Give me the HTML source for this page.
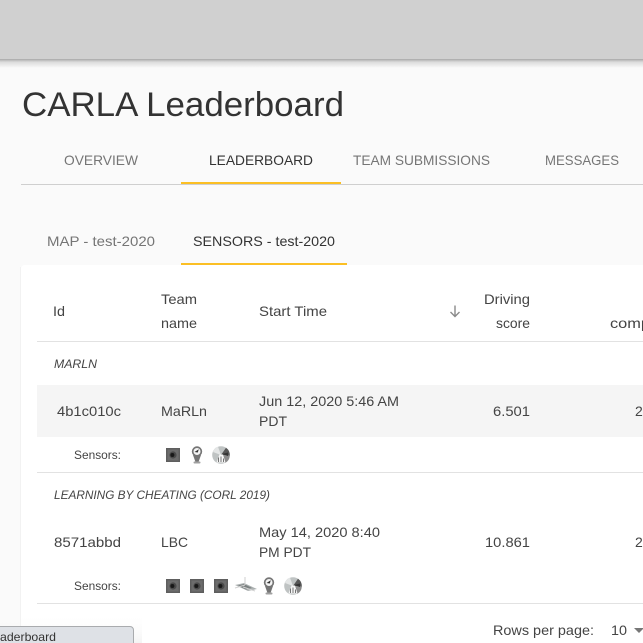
<!DOCTYPE html>
<html><head><meta charset="utf-8"><style>
html,body{margin:0;padding:0;width:643px;height:643px;overflow:hidden;background:#fafafa}
svg{display:block}
text{font-family:"Liberation Sans",sans-serif;font-size:14px;fill:#444}
</style></head><body>
<svg width="643" height="643" viewBox="0 0 643 643" xmlns="http://www.w3.org/2000/svg">
<defs>
<linearGradient id="sh" x1="0" y1="0" x2="0" y2="1"><stop offset="0" stop-color="#a8a8a8"/><stop offset=".35" stop-color="#dcdcdc"/><stop offset="1" stop-color="#fafafa"/></linearGradient>
<linearGradient id="tt" x1="0" y1="0" x2="0" y2="1"><stop offset="0" stop-color="#fafafa" stop-opacity="0"/><stop offset="1" stop-color="#e9e9e9"/></linearGradient>
<g id="cam"><rect width="14" height="14" fill="#5e5e5e"/><rect x="1.500" y="1.500" width="11" height="11" fill="#6c6c6c"/><circle cx="7" cy="7" r="3.600" fill="#4a4a4a"/><circle cx="6.400" cy="7" r="2" fill="#181818"/></g>
<g id="pin"><circle cx="6" cy="5.500" r="5.200" fill="#757575"/><circle cx="6" cy="5.500" r="3.500" fill="#f4f4f4"/><path d="M3.500 6 L7.800 3.300 L6.800 6.500Z" fill="#333"/><path d="M2 9 L4.300 15.500 H7.700 L10 9Z" fill="#757575"/><rect x="2.500" y="15.500" width="7" height="2" rx="1" fill="#a0a0a0"/></g>
<g id="gps"><circle cx="9" cy="9" r="8.800" fill="#bfc3c3"/><path d="M9 9 L14 1.800 A8.800 8.800 0 0 1 17.800 9.500Z" fill="#565656"/><path d="M9 9 L17.800 9.500 A8.800 8.800 0 0 1 13 17Z" fill="#8b8b8b"/><path d="M9 9 L6 .7 A8.800 8.800 0 0 0 1 6Z" fill="#e4e6e6"/><path d="M4.500 16.500 L7.500 8.500 L11 8.500 L13.500 16.500Z" fill="#f6f6f6"/><path d="M6.500 16 V11.500 M9 16 V10.500 M11.500 16 V12.500" stroke="#666" stroke-width=".9"/><path d="M10 8 L16 6.500 V10Z" fill="#333"/></g>
<g id="lidar"><path d="M0 8 L9 6 L22 12 L13 14Z" fill="#adb2b2"/><path d="M3 8.500 L9 7 L17 11 L11 12.500Z" fill="#7b8181"/><path d="M10 0 V8" stroke="#cfcfcf" stroke-width="1"/><path d="M0 11 L10 8 M8 10 L20 14" stroke="#d2d2d2" stroke-width="1"/></g>
</defs>
<rect width="643" height="643" fill="#fafafa"/>
<rect x="0" y="59" width="643" height="9" fill="url(#sh)"/>
<rect width="643" height="59" fill="#d0d0d0"/>
<text x="22" y="116" style="font-size:34px;fill:#333" textLength="322" lengthAdjust="spacingAndGlyphs">CARLA Leaderboard</text>
<text x="64" y="165" style="fill:#757575" textLength="74" lengthAdjust="spacingAndGlyphs">OVERVIEW</text>
<text x="209" y="165" style="fill:#333" textLength="104" lengthAdjust="spacingAndGlyphs">LEADERBOARD</text>
<text x="353" y="165" style="fill:#757575" textLength="137" lengthAdjust="spacingAndGlyphs">TEAM SUBMISSIONS</text>
<text x="545" y="165" style="fill:#757575" textLength="74" lengthAdjust="spacingAndGlyphs">MESSAGES</text>
<rect x="21" y="184" width="622" height="1" fill="#cfcfcf"/>
<rect x="181" y="182" width="160" height="2" fill="#fbbf24"/>
<text x="47" y="246" style="fill:#757575" textLength="108" lengthAdjust="spacingAndGlyphs">MAP - test-2020</text>
<text x="193" y="246" style="fill:#333" textLength="142" lengthAdjust="spacingAndGlyphs">SENSORS - test-2020</text>
<rect x="181" y="263" width="166" height="2" fill="#fbbf24"/>
<rect x="20" y="267" width="1" height="376" fill="#f2f2f2"/>
<path d="M21 269 a4 4 0 0 1 4 -4 H643 V643 H21Z" fill="#fff"/>
<rect x="0" y="616" width="142" height="27" fill="url(#tt)" opacity=".5"/>

<text x="53" y="316" textLength="12" lengthAdjust="spacingAndGlyphs">Id</text>
<text x="161" y="304" textLength="36" lengthAdjust="spacingAndGlyphs">Team</text>
<text x="161" y="328" textLength="36" lengthAdjust="spacingAndGlyphs">name</text>
<text x="259" y="316" textLength="68" lengthAdjust="spacingAndGlyphs">Start Time</text>
<path d="M455 305.500 V316.500 M450.500 312 L455 316.500 L459.500 312" fill="none" stroke="#8a8a8a" stroke-width="1.400"/>
<text x="484" y="304" textLength="46" lengthAdjust="spacingAndGlyphs">Driving</text>
<text x="496" y="328" textLength="34" lengthAdjust="spacingAndGlyphs">score</text>
<text x="610" y="328" textLength="40" lengthAdjust="spacingAndGlyphs">comp</text>
<rect x="37" y="341" width="606" height="1" fill="#e2e2e2"/>

<text x="54" y="368" font-style="italic" style="font-size:12px" textLength="43" lengthAdjust="spacingAndGlyphs">MARLN</text>
<rect x="37" y="385" width="606" height="52" fill="#f5f5f5"/>
<text x="57" y="416" textLength="64" lengthAdjust="spacingAndGlyphs">4b1c010c</text>
<text x="161" y="416" textLength="46" lengthAdjust="spacingAndGlyphs">MaRLn</text>
<text x="259" y="406" textLength="140" lengthAdjust="spacingAndGlyphs">Jun 12, 2020 5:46 AM</text>
<text x="259" y="426" textLength="28" lengthAdjust="spacingAndGlyphs">PDT</text>
<text x="493" y="416" textLength="37" lengthAdjust="spacingAndGlyphs">6.501</text>
<text x="635" y="416">2</text>
<text x="74" y="459" style="font-size:12px" textLength="47" lengthAdjust="spacingAndGlyphs">Sensors:</text>
<use href="#cam" x="166" y="448"/>
<use href="#pin" x="191" y="446"/>
<use href="#gps" x="212" y="446"/>
<rect x="37" y="472" width="606" height="1" fill="#e2e2e2"/>

<text x="54" y="499" font-style="italic" style="font-size:12px" textLength="216" lengthAdjust="spacingAndGlyphs">LEARNING BY CHEATING (CORL 2019)</text>
<text x="54" y="547" textLength="67" lengthAdjust="spacingAndGlyphs">8571abbd</text>
<text x="161" y="547" textLength="27" lengthAdjust="spacingAndGlyphs">LBC</text>
<text x="259" y="537" textLength="121" lengthAdjust="spacingAndGlyphs">May 14, 2020 8:40</text>
<text x="259" y="557" textLength="52" lengthAdjust="spacingAndGlyphs">PM PDT</text>
<text x="485" y="547" textLength="45" lengthAdjust="spacingAndGlyphs">10.861</text>
<text x="635" y="547">2</text>
<text x="74" y="590" style="font-size:12px" textLength="47" lengthAdjust="spacingAndGlyphs">Sensors:</text>
<use href="#cam" x="166" y="579"/>
<use href="#cam" x="190" y="579"/>
<use href="#cam" x="214" y="579"/>
<use href="#lidar" x="235" y="577"/>
<use href="#pin" x="263" y="577"/>
<use href="#gps" x="284" y="577"/>
<rect x="37" y="603" width="606" height="1" fill="#e2e2e2"/>

<text x="493" y="635" textLength="101" lengthAdjust="spacingAndGlyphs">Rows per page:</text>
<text x="611" y="635" textLength="16" lengthAdjust="spacingAndGlyphs">10</text>
<path d="M634 628 H644 L639 633Z" fill="#777"/>

<path d="M-2 626.500 H130 a3.500 3.500 0 0 1 3.500 3.500 V644 H-2Z" fill="#dee1e6" stroke="#a9abae"/>
<text x="0" y="641" style="font-size:12px;fill:#333" textLength="56" lengthAdjust="spacingAndGlyphs">aderboard</text>
</svg>
</body></html>
